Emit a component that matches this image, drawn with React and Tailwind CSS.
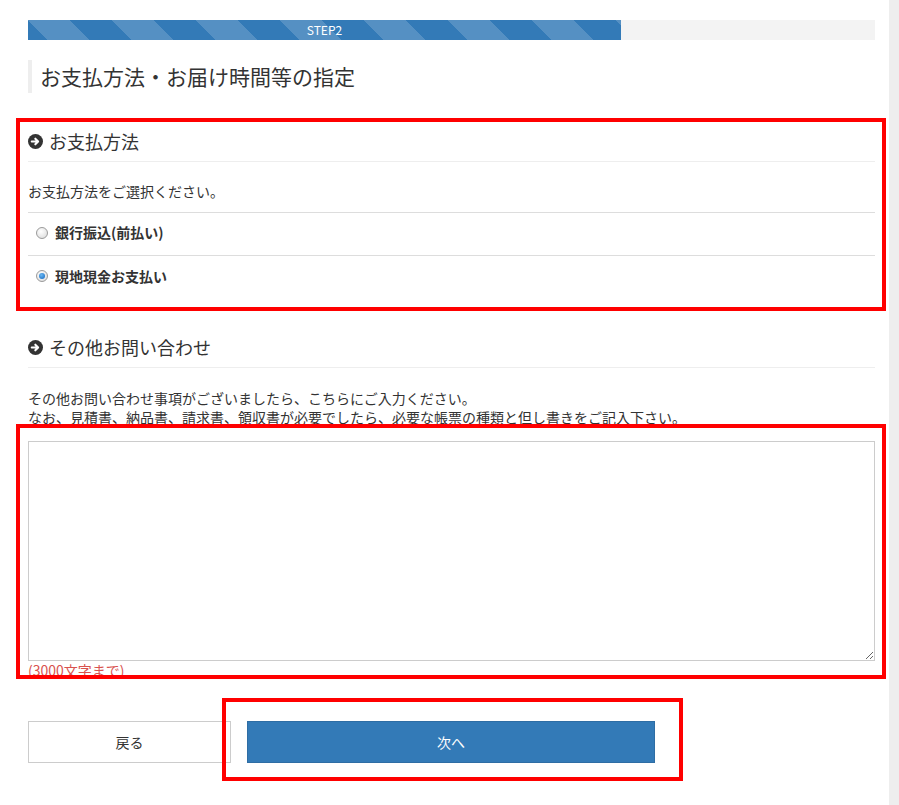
import React from "react";

const font = { fontFamily: '"Noto Sans CJK JP", "Noto Sans", sans-serif' };

const ArrowCircle = () => (
  <svg width="15" height="15" viewBox="0 0 16 16" className="shrink-0">
    <circle cx="8" cy="8" r="8" fill="#333" />
    <path d="M4 8h6.5M7.8 5l3 3-3 3" stroke="#fff" strokeWidth="2.2" fill="none" strokeLinecap="round" strokeLinejoin="round" />
  </svg>
);

const Radio = ({ checked }) => (
  <span className="w-[12px] h-[12px] rounded-full border border-[#9a9a9a] bg-[radial-gradient(circle_at_40%_35%,#ffffff,#d8d8d8)] flex items-center justify-center shrink-0">
    {checked && (
      <span className="w-[6px] h-[6px] rounded-full bg-[radial-gradient(circle_at_40%_35%,#6ab8f2,#0f63be)]" />
    )}
  </span>
);

const SectionHeading = ({ children }) => (
  <div className="flex items-center gap-[6px] border-b border-[#eee] pb-[7px] text-[18px] leading-[26px] text-[#333]">
    <ArrowCircle />
    <span>{children}</span>
  </div>
);

const payments = [
  { id: "bank", label: "銀行振込(前払い)", checked: false },
  { id: "cash", label: "現地現金お支払い", checked: true },
];

export default function App() {
  return (
    <div className="relative flex min-h-[805px] bg-white" style={font}>
      <main className="w-[889px] pl-[28px] pr-[14px] pt-[20px] text-[#333]">
        {/* progress */}
        <div className="flex h-[20px] bg-[#f3f3f3]">
          <div className="w-[593px] bg-[#337ab7] bg-[linear-gradient(45deg,rgba(255,255,255,.17)_25%,transparent_25%,transparent_50%,rgba(255,255,255,.17)_50%,rgba(255,255,255,.17)_75%,transparent_75%,transparent)] bg-[length:84px_84px] flex items-center justify-center text-white text-[12px] leading-none">
            STEP2
          </div>
        </div>

        {/* title */}
        <h1 className="mt-[20px] h-[33px] border-l-4 border-[#eee] pl-[8px] flex items-center text-[21px] text-[#333]">
          お支払方法・お届け時間等の指定
        </h1>

        {/* payment */}
        <section className="mt-[35px]">
          <SectionHeading>お支払方法</SectionHeading>
          <p className="pt-[19px] pb-[11px] text-[14px] leading-[20px] border-b border-[#ddd]">
            お支払方法をご選択ください。
          </p>
          {payments.map((p, i) => (
            <label
              key={p.id}
              className={`flex items-center gap-[7px] pl-[8px] pb-[3px] h-[43px] text-[14px] font-bold ${
                i === 0 ? "border-b border-[#ddd]" : ""
              }`}
            >
              <Radio checked={p.checked} />
              {p.label}
            </label>
          ))}
        </section>

        {/* other */}
        <section className="mt-[35px]">
          <SectionHeading>その他お問い合わせ</SectionHeading>
          <p className="mt-[21px] text-[14px] leading-[19px]">
            その他お問い合わせ事項がございましたら、こちらにご入力ください。
            <br />
            なお、見積書、納品書、請求書、領収書が必要でしたら、必要な帳票の種類と但し書きをご記入下さい。
          </p>
          <textarea className="mt-[14px] block w-full h-[220px] border border-[#ccc] bg-white resize-y outline-none" />
          <p className="text-[14px] leading-[18px] text-[#d9534f]">(3000文字まで)</p>
        </section>

        {/* buttons */}
        <div className="mt-[42px] flex gap-[16px]">
          <button className="w-[203px] h-[42px] border border-[#ccc] bg-white text-[14px] text-[#333]">
            戻る
          </button>
          <button className="w-[408px] h-[42px] bg-[#337ab7] border border-[#2e6da4] text-[14px] text-white">
            次へ
          </button>
        </div>
      </main>
      <div className="w-[10px] bg-[#eee]" />

      {/* annotation boxes */}
      <div className="absolute left-[16px] top-[118px] w-[870px] h-[193px] border-[4px] border-[#ff0000] pointer-events-none" />
      <div className="absolute left-[16px] top-[424px] w-[870px] h-[255px] border-[4px] border-[#ff0000] pointer-events-none" />
      <div className="absolute left-[222px] top-[698px] w-[461px] h-[83px] border-[4px] border-[#ff0000] pointer-events-none" />
    </div>
  );
}
